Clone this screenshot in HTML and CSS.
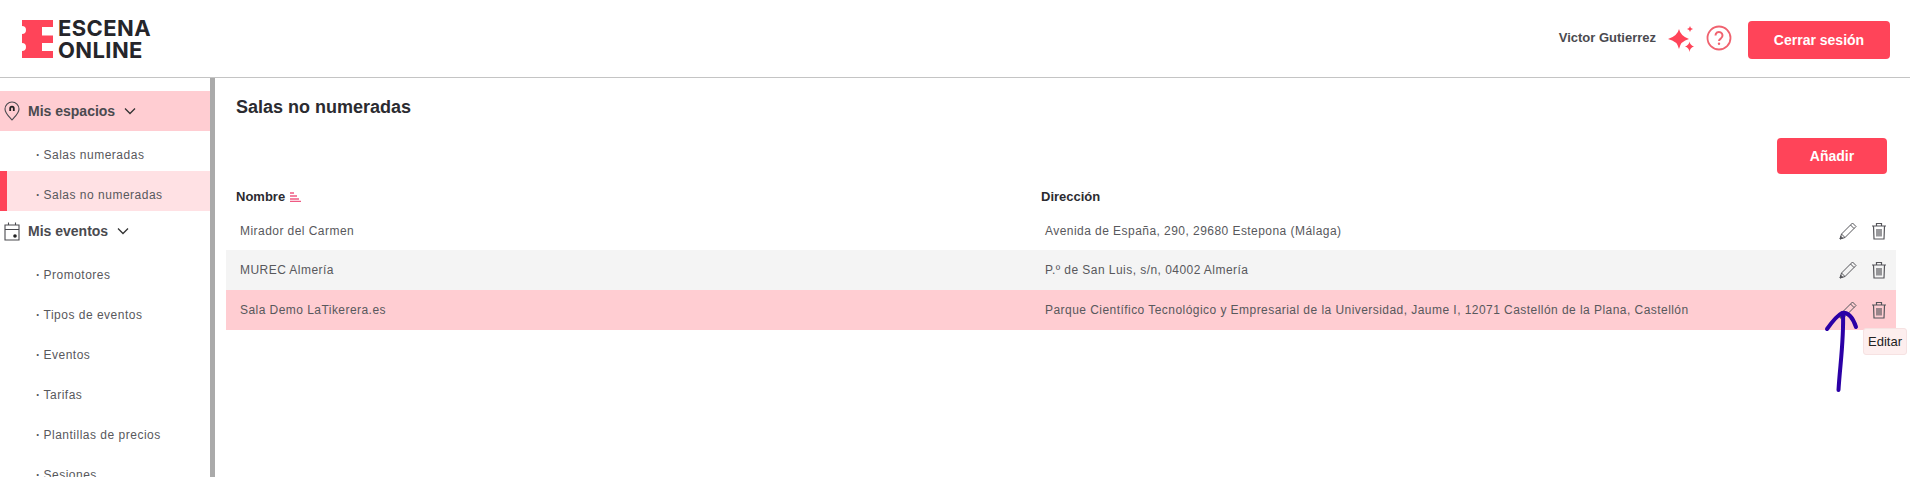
FILE: index.html
```html
<!DOCTYPE html>
<html lang="es">
<head>
  <meta charset="UTF-8" />
  <meta name="viewport" content="width=device-width, initial-scale=1.0"/>
  <title>Escena Online</title>
  <link rel="stylesheet" href="styles.css">
</head>
<body>
<header class="topbar">
  <div class="logo">
    <svg class="logo-mark" viewBox="0 0 31 38" width="31" height="38">
      <path fill="#ff4459" d="M0 0H31V7H20V15.500H31V23H20V31H31V38H0V31A4 4 0 0 0 0 23V14A4 4 0 0 0 0 6Z"/>
    </svg>
    <div class="logo-text">ESCENA<br>ONLINE</div>
  </div>
  <div class="user-box">
    <span class="user-name">Victor Gutierrez</span>
    <svg class="sparkle" viewBox="0 0 26 26" width="26" height="26">
      <path fill="#ff4459" d="M11 3Q12.500 10 21 13Q12.500 15 11 23Q9.500 15 0 13Q9.500 10 11 3Z"/>
      <path fill="#ff4459" d="M21.500 15.500Q22 19 26 20.500Q22 21.500 21.500 26Q21 21.500 17 20.500Q21 19 21.500 15.500Z"/>
      <path fill="#ff4459" d="M22 0Q22.300 2.500 25 3Q22.300 3.500 22 6Q21.700 3.500 19 3Q21.700 2.500 22 0Z"/>
    </svg>
    <svg class="help" viewBox="0 0 26 26" width="26" height="26">
      <circle cx="13" cy="13" r="11.500" fill="none" stroke="#f0626f" stroke-width="1.800"/>
      <path fill="none" stroke="#f0626f" stroke-width="2" d="M9.500 10.500A3.500 3.500 0 1 1 15 13.300C13.600 14.200 13 14.800 13 16"/>
      <circle cx="13" cy="18.800" r="1.200" fill="#f0626f"/>
    </svg>
    <button class="btn btn-logout">Cerrar sesión</button>
  </div>
</header>

<div class="layout">
  <aside class="sidebar">
    <nav class="menu">
      <div class="menu-head active">
        <svg viewBox="0 0 16 20" width="16" height="20">
          <path fill="none" stroke="#4a4a4f" stroke-width="1.100" d="M8 19C4 14.500 1 12 1 8A7 7 0 0 1 15 8C15 12 12 14.500 8 19Z"/>
          <path fill="none" stroke="#222" stroke-width="1.800" d="M6.200 10V7.500A1.800 1.800 0 0 1 9.800 7.500V10"/>
        </svg>
        <span>Mis espacios</span>
        <svg class="chev" viewBox="0 0 12 8" width="12" height="8"><path fill="none" stroke="#333" stroke-width="1.300" d="M1 1.500L6 6.500L11 1.500"/></svg>
      </div>
      <a class="menu-sub">Salas numeradas</a>
      <a class="menu-sub current">Salas no numeradas</a>
      <div class="menu-head">
        <svg viewBox="0 0 16 20" width="16" height="20">
          <path fill="none" stroke="#4a4a4f" stroke-width="1.100" d="M1 4H15V19H1ZM1 8.500H15M4.500 1.500V4M11.500 1.500V4"/>
          <circle cx="11" cy="15" r="1.800" fill="#222"/>
        </svg>
        <span>Mis eventos</span>
        <svg class="chev" viewBox="0 0 12 8" width="12" height="8"><path fill="none" stroke="#333" stroke-width="1.300" d="M1 1.500L6 6.500L11 1.500"/></svg>
      </div>
      <a class="menu-sub">Promotores</a>
      <a class="menu-sub">Tipos de eventos</a>
      <a class="menu-sub">Eventos</a>
      <a class="menu-sub">Tarifas</a>
      <a class="menu-sub">Plantillas de precios</a>
      <a class="menu-sub">Sesiones</a>
    </nav>
    <div class="scroll-thumb"></div>
  </aside>

  <main class="content">
    <h1 class="page-title">Salas no numeradas</h1>
    <div class="actions"><button class="btn btn-add">Añadir</button></div>
    <div class="table">
      <div class="table-head">
        <div class="col-name">Nombre
          <svg viewBox="0 0 11 10" width="11" height="10"><path fill="none" stroke="#ef5a83" stroke-width="1.500" d="M0 1H4M0 4H7M0 7H9M0 9.500H11"/></svg>
        </div>
        <div class="col-addr">Dirección</div>
      </div>
      <div class="row first">
        <div class="col-name">Mirador del Carmen</div>
        <div class="col-addr">Avenida de España, 290, 29680 Estepona (Málaga)</div>
        <div class="row-icons">
          <svg viewBox="0 0 18 18" width="18" height="18"><use href="#pencil"/></svg>
          <svg viewBox="0 0 16 18" width="16" height="18"><use href="#trash"/></svg>
        </div>
      </div>
      <div class="row even">
        <div class="col-name">MUREC Almería</div>
        <div class="col-addr">P.º de San Luis, s/n, 04002 Almería</div>
        <div class="row-icons">
          <svg viewBox="0 0 18 18" width="18" height="18"><use href="#pencil"/></svg>
          <svg viewBox="0 0 16 18" width="16" height="18"><use href="#trash"/></svg>
        </div>
      </div>
      <div class="row hovered">
        <div class="col-name">Sala Demo LaTikerera.es</div>
        <div class="col-addr">Parque Científico Tecnológico y Empresarial de la Universidad, Jaume I, 12071 Castellón de la Plana, Castellón</div>
        <div class="row-icons">
          <svg viewBox="0 0 18 18" width="18" height="18"><use href="#pencil"/></svg>
          <svg viewBox="0 0 16 18" width="16" height="18"><use href="#trash"/></svg>
          <div class="tooltip">Editar</div>
        </div>
      </div>
    </div>
  </main>
</div>

<svg class="scribble" viewBox="0 0 1910 477" width="1910" height="477">
  <path fill="none" stroke="#2b00a6" stroke-width="4" stroke-linecap="round" stroke-linejoin="round" d="M1827 329C1832 322 1838 315 1842 313C1848 312 1853 318 1856 327M1843 313C1844 340 1840 365 1838.500 390"/>
</svg>

<svg class="defs" width="0" height="0">
  <defs>
    <g id="pencil" fill="none" stroke="#55555a" stroke-width="1">
      <path d="M1 17L2.500 12L13.500 1L17 4.500L6 15.500Z"/>
      <path d="M2.500 12L6 15.500M11.500 3L15 6.500"/>
      <path fill="#55555a" d="M1 17L1.800 14.300L3.700 16.200Z"/>
    </g>
    <g id="trash" fill="none" stroke="#55555a" stroke-width="1.200">
      <path d="M1 4H15M5.500 4V1.500H10.500V4M2.500 4L3 17H13L13.500 4M6 7V14.500M8 7V14.500M10 7V14.500"/>
    </g>
  </defs>
</svg>
</body>
</html>
```

FILE: styles.css
```css
html, body {
  margin: 0;
  height: 100%;
  overflow: hidden;
}
body {
  background-color: #fff;
  color: #333;
  font-family: 'Liberation Sans', Arial, sans-serif;
  display: flex;
  flex-direction: column;
}
.topbar {
  height: 77px;
  flex: none;
  display: flex;
  align-items: center;
  justify-content: space-between;
  padding: 0 20px 0 22px;
  border-bottom: 1px solid #c4c4c4;
}
.logo {
  display: flex;
  align-items: center;
  gap: 5px;
}
.logo-text {
  font-family: 'Inter', sans-serif;
  font-weight: 700;
  font-size: 22px;
  line-height: 22px;
  letter-spacing: 0.4px;
  color: #25252a;
}
.user-box {
  display: flex;
  align-items: center;
  margin-top: 2px;
}
.user-name {
  font-size: 13px;
  font-weight: bold;
  color: #4a4a4f;
  margin-right: 12px;
  margin-bottom: 4px;
}
.sparkle {
  margin-right: 12px;
  margin-bottom: 2px;
}
.help {
  margin-right: 16px;
  margin-bottom: 4px;
}
.btn {
  background-color: #ff4459;
  color: #fff;
  border: none;
  border-radius: 4px;
  font-family: 'Liberation Sans', Arial, sans-serif;
  font-weight: bold;
  font-size: 14px;
  cursor: pointer;
}
.btn-logout {
  width: 142px;
  height: 38px;
}
.btn-add {
  width: 110px;
  height: 36px;
}
.layout {
  flex: 1;
  display: flex;
  min-height: 0;
}
.sidebar {
  width: 215px;
  flex: none;
  display: flex;
  overflow: hidden;
}
.menu {
  width: 210px;
  padding-top: 13px;
}
.scroll-thumb {
  width: 5px;
  background-color: #aaa;
}
.menu-head {
  height: 40px;
  display: flex;
  align-items: center;
  gap: 8px;
  padding-left: 4px;
  font-size: 14px;
  font-weight: bold;
  color: #4a4a4f;
}
.menu-head .chev { margin-left: 1px; }
.menu-head.active { background-color: #ffcdd2; }
.menu-sub {
  box-sizing: border-box;
  height: 40px;
  display: flex;
  align-items: center;
  padding: 8px 0 0 36px;
  font-size: 12px;
  letter-spacing: 0.5px;
  color: #58585c;
}
.menu-sub::before {
  content: "·";
  margin-right: 3px;
  font-weight: bold;
}
.menu-sub.current {
  background-color: #ffe1e4;
  border-left: 7px solid #ff4459;
  padding-left: 29px;
}
.content {
  flex: 1;
  padding: 0 14px 0 11px;
  min-width: 0;
}
.page-title {
  margin: 19px 0 0 10px;
  font-size: 18px;
  line-height: 20px;
  color: #2b2b30;
}
.actions {
  display: flex;
  justify-content: flex-end;
  margin: 21px 9px 0 0;
}
.table-head {
  display: grid;
  grid-template-columns: 805px 1fr;
  margin: 11px 0 3px;
  height: 22px;
  font-size: 13px;
  font-weight: bold;
  color: #2b2b30;
  align-items: center;
  padding-left: 10px;
}
.table-head svg {
  margin-left: 1px;
  vertical-align: -1px;
}
.row {
  box-sizing: border-box;
  display: grid;
  grid-template-columns: 805px 1fr auto;
  height: 40px;
  align-items: center;
  padding-left: 14px;
  font-size: 12px;
  letter-spacing: 0.45px;
  color: #58585c;
}
.row.first { padding-top: 2px; }
.row.even { background-color: #f4f4f4; }
.row.hovered { background-color: #ffcdd2; }
.row-icons {
  position: relative;
  display: flex;
  align-items: center;
  gap: 14px;
  padding-right: 9px;
}
.tooltip {
  position: absolute;
  top: 27px;
  right: -11px;
  padding: 5px 4px;
  font-size: 13px;
  letter-spacing: 0;
  color: #222;
  background-color: #fdeeee;
  border: 1px solid #f6e2e2;
  border-radius: 3px;
}
.scribble {
  position: absolute;
  left: 0;
  top: 0;
  pointer-events: none;
}
.defs { position: absolute; }
```
